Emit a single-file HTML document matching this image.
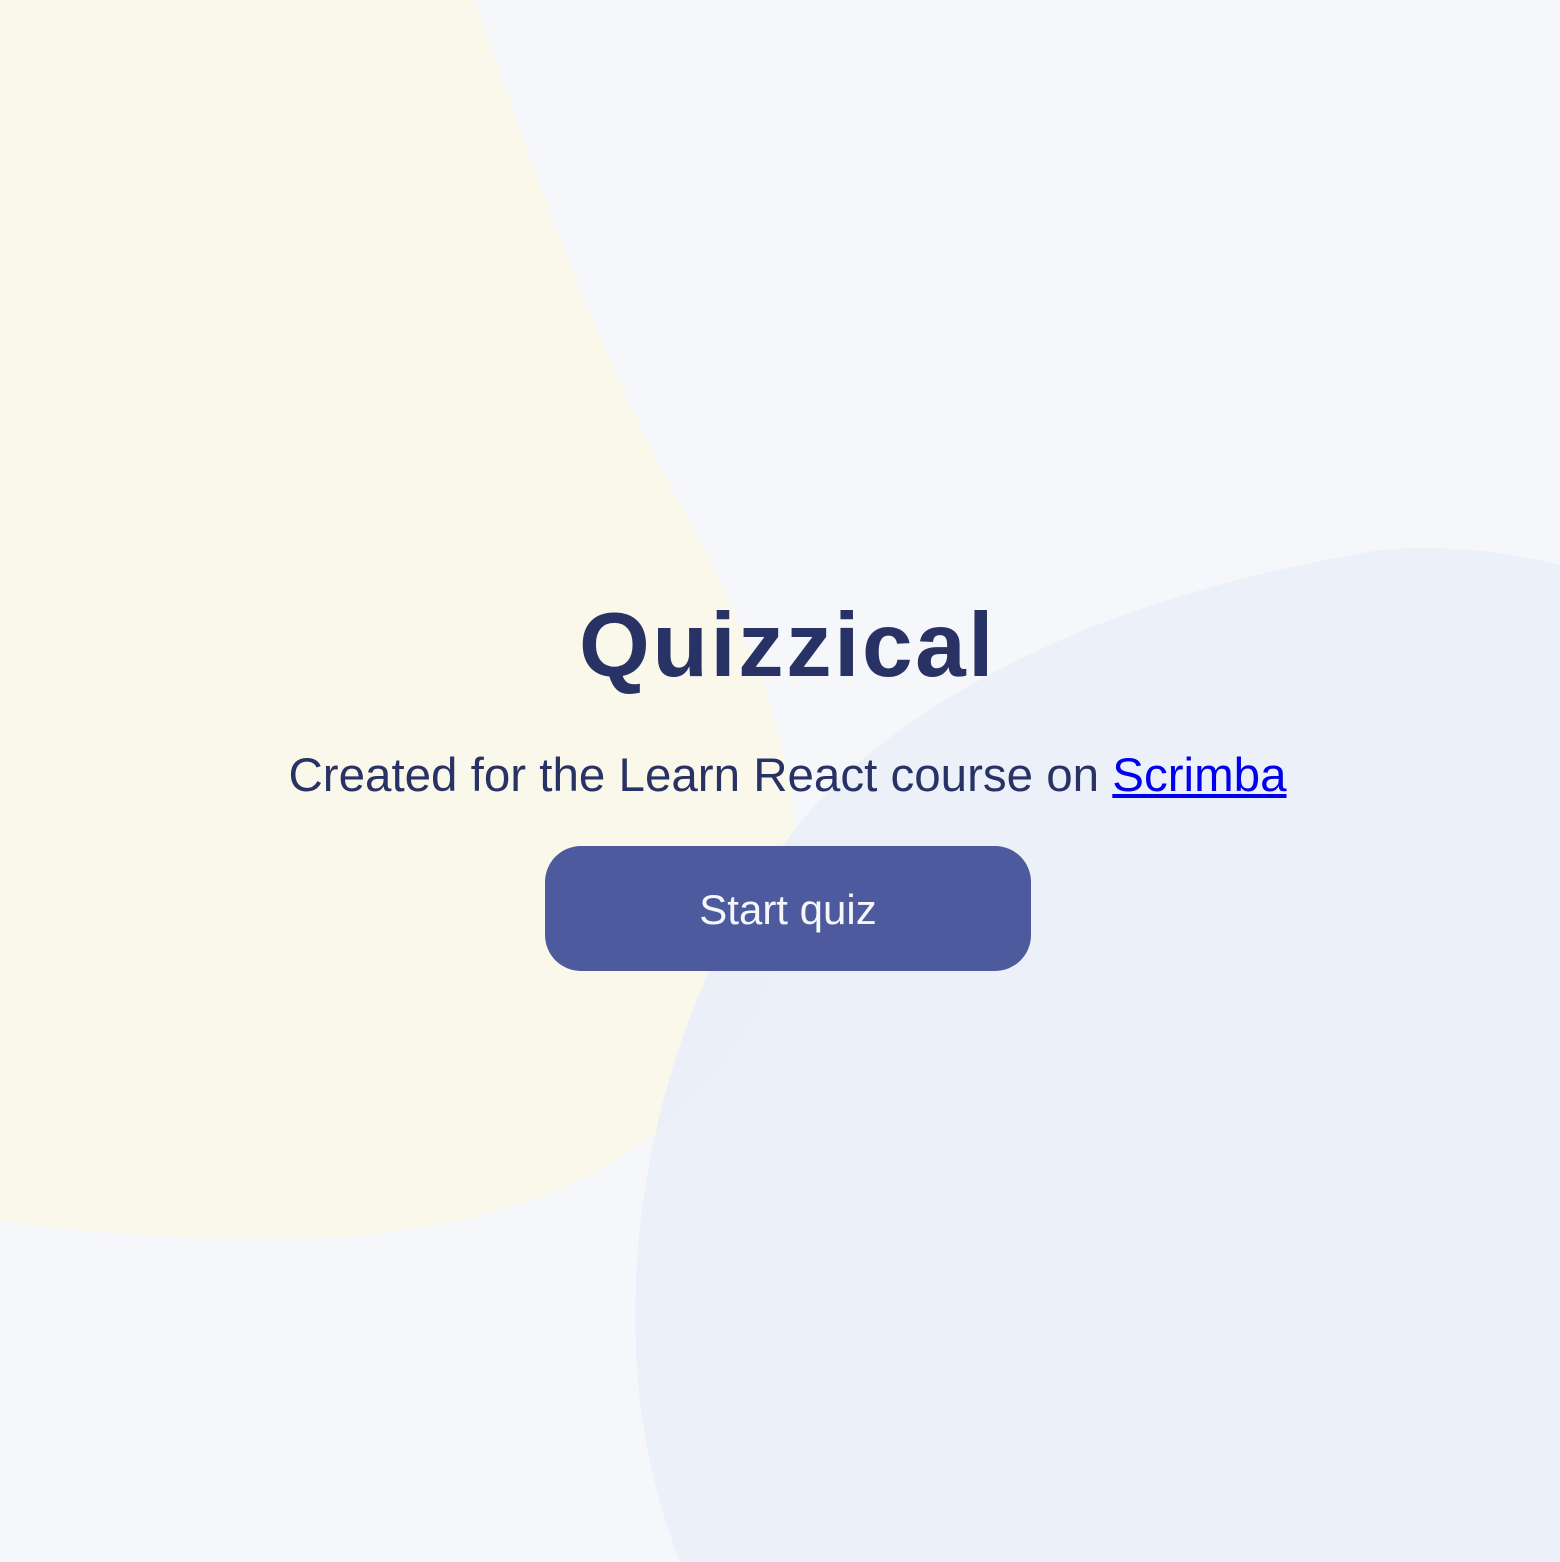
<!DOCTYPE html>
<html><head><meta charset="utf-8"><style>
html,body{margin:0;padding:0;width:1560px;height:1562px;overflow:hidden;background:#F5F7FB;font-family:"Liberation Sans",sans-serif;}
svg.bg{position:absolute;left:0;top:0}
h1{position:absolute;left:0;top:596px;width:1575px;margin:0;text-align:center;font-size:91px;font-weight:bold;letter-spacing:2.5px;color:#293264;line-height:100px}
p{position:absolute;left:0;top:748px;width:1575px;margin:0;text-align:center;font-size:47.5px;line-height:56px;color:#293264}
a{color:#0000EE;text-decoration:underline}
.btn{position:absolute;left:545px;top:846px;width:486px;height:125px;border-radius:36px;background:#4D5B9E;color:#F5F7FB;font-size:42px;text-align:center;line-height:128px}
</style></head><body>
<svg class="bg" width="1560" height="1562" viewBox="0 0 1560 1562">
<path d="M0 0 L475 0 C560 250 620 400 700 540 C760 660 800 760 795 880 C785 1000 720 1100 600 1170 C470 1240 300 1245 180 1237 C100 1233 40 1228 0 1220 Z" fill="#FAF8EA"/>
<path d="M1560 565 C1500 550 1440 545 1380 550 C1200 580 1000 640 850 770 C720 890 650 1080 637 1260 C630 1380 645 1470 680 1562 L1560 1562 Z" fill="#E9EFF8" fill-opacity="0.92"/>
</svg>
<h1>Quizzical</h1>
<p>Created for the Learn React course on <a>Scrimba</a></p>
<div class="btn">Start quiz</div>
</body></html>
